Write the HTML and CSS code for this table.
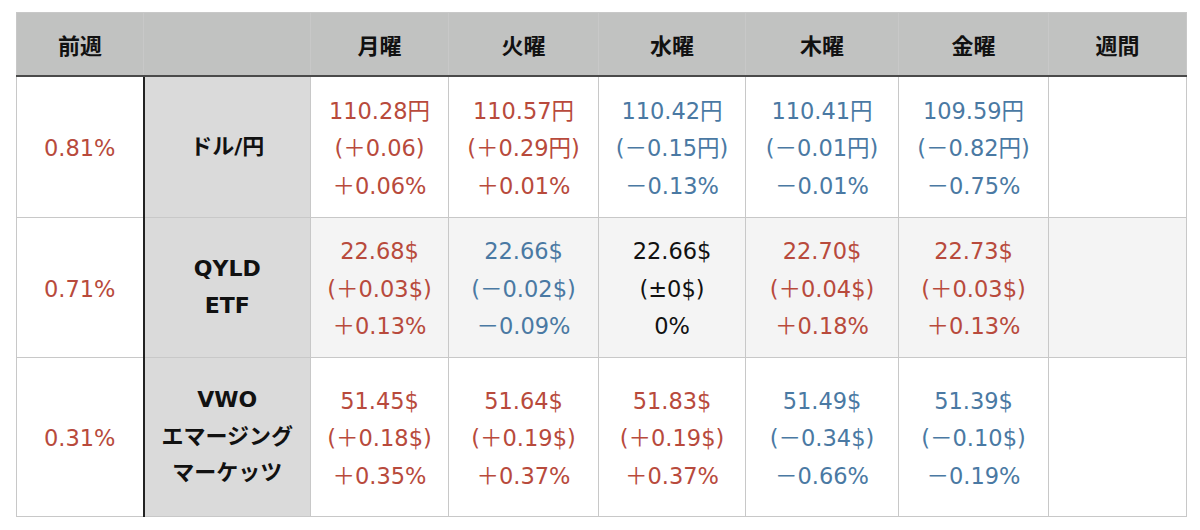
FILE: index.html
```html
<!DOCTYPE html>
<html lang="ja">
<head>
<meta charset="utf-8">
<link rel="stylesheet" href="styles.css">
</head>
<body>
<table class="tbl">
  <colgroup>
    <col class="c1"><col class="c2"><col class="c3"><col class="c4"><col class="c5"><col class="c6"><col class="c7"><col class="c8">
  </colgroup>
  <thead>
    <tr class="head">
      <th>前週</th><th class="name-h"></th><th>月曜</th><th>火曜</th><th>水曜</th><th>木曜</th><th>金曜</th><th>週間</th>
    </tr>
  </thead>
  <tbody>
    <tr class="r1">
      <td class="up">0.81%</td>
      <td class="name">ドル/円</td>
      <td class="up">110.28円<br>(＋0.06)<br>＋0.06%</td>
      <td class="up">110.57円<br>(＋0.29円)<br>＋0.01%</td>
      <td class="down">110.42円<br>(－0.15円)<br>－0.13%</td>
      <td class="down">110.41円<br>(－0.01円)<br>－0.01%</td>
      <td class="down">109.59円<br>(－0.82円)<br>－0.75%</td>
      <td></td>
    </tr>
    <tr class="r2 stripe">
      <td class="up first">0.71%</td>
      <td class="name">QYLD<br>ETF</td>
      <td class="up">22.68$<br>(＋0.03$)<br>＋0.13%</td>
      <td class="down">22.66$<br>(－0.02$)<br>－0.09%</td>
      <td class="flat">22.66$<br>(±0$)<br>0%</td>
      <td class="up">22.70$<br>(＋0.04$)<br>＋0.18%</td>
      <td class="up">22.73$<br>(＋0.03$)<br>＋0.13%</td>
      <td></td>
    </tr>
    <tr class="r3">
      <td class="up">0.31%</td>
      <td class="name">VWO<br>エマージング<br>マーケッツ</td>
      <td class="up">51.45$<br>(＋0.18$)<br>＋0.35%</td>
      <td class="up">51.64$<br>(＋0.19$)<br>＋0.37%</td>
      <td class="up">51.83$<br>(＋0.19$)<br>＋0.37%</td>
      <td class="down">51.49$<br>(－0.34$)<br>－0.66%</td>
      <td class="down">51.39$<br>(－0.10$)<br>－0.19%</td>
      <td></td>
    </tr>
  </tbody>
</table>
</body>
</html>
```

FILE: styles.css
```css
html, body {
  margin: 0;
  padding: 0;
  background: #ffffff;
}
body {
  padding: 12px 0 0 16px;
  font-family: "Noto Sans CJK JP", "Noto Sans", sans-serif;
}
.tbl {
  border-collapse: collapse;
  table-layout: fixed;
  width: 1171px;
  border: 1px solid #c4c4c4;
}
.c1 { width: 127px; }
.c2 { width: 167px; }
.c3 { width: 138px; }
.c4 { width: 150px; }
.c5 { width: 147px; }
.c6 { width: 153px; }
.c7 { width: 150px; }
.c8 { width: 138px; }

.tbl th, .tbl td {
  border: 1px solid #c8c8c8;
  text-align: center;
  vertical-align: middle;
  padding: 0;
}
.head th {
  height: 62px;
  background: #c1c2c1;
  font-size: 22px;
  font-weight: 700;
  color: #111;
  border-bottom: 2px solid #4a4a4a;
}
.tbl td {
  font-family: "DejaVu Sans", "Noto Sans CJK JP", sans-serif;
  font-size: 22.5px;
  font-weight: 400;
  line-height: 37.5px;
  color: #111;
  padding-top: 4px;
}
.r1 td { height: 136px; }
.r2 td { height: 135px; }
.r3 td { height: 154px; }
.stripe td { background: #f4f4f4; }
.stripe td.first { background: #ffffff; }
.tbl td.name {
  background: #dadada;
  border-left: 2px solid #222;
  font-family: "DejaVu Sans", "Noto Sans CJK JP", sans-serif;
  font-weight: 700;
  color: #111;
  font-size: 22px;
  line-height: 36.5px;
  padding-top: 0;
}
.tbl td.up { color: #b84a3c; }
.tbl td.down { color: #4a79a3; }
.tbl td.flat { color: #111; }
```
